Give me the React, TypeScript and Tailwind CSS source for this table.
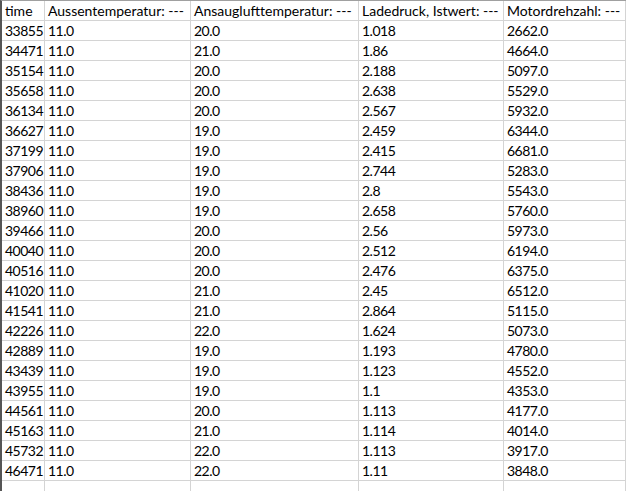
const headers = [
  "time",
  "Aussentemperatur: ---",
  "Ansauglufttemperatur: ---",
  "Ladedruck, Istwert: ---",
  "Motordrehzahl: ---",
];

const rows: string[][] = [
  ["33855", "11.0", "20.0", "1.018", "2662.0"],
  ["34471", "11.0", "21.0", "1.86", "4664.0"],
  ["35154", "11.0", "20.0", "2.188", "5097.0"],
  ["35658", "11.0", "20.0", "2.638", "5529.0"],
  ["36134", "11.0", "20.0", "2.567", "5932.0"],
  ["36627", "11.0", "19.0", "2.459", "6344.0"],
  ["37199", "11.0", "19.0", "2.415", "6681.0"],
  ["37906", "11.0", "19.0", "2.744", "5283.0"],
  ["38436", "11.0", "19.0", "2.8", "5543.0"],
  ["38960", "11.0", "19.0", "2.658", "5760.0"],
  ["39466", "11.0", "20.0", "2.56", "5973.0"],
  ["40040", "11.0", "20.0", "2.512", "6194.0"],
  ["40516", "11.0", "20.0", "2.476", "6375.0"],
  ["41020", "11.0", "21.0", "2.45", "6512.0"],
  ["41541", "11.0", "21.0", "2.864", "5115.0"],
  ["42226", "11.0", "22.0", "1.624", "5073.0"],
  ["42889", "11.0", "19.0", "1.193", "4780.0"],
  ["43439", "11.0", "19.0", "1.123", "4552.0"],
  ["43955", "11.0", "19.0", "1.1", "4353.0"],
  ["44561", "11.0", "20.0", "1.113", "4177.0"],
  ["45163", "11.0", "21.0", "1.114", "4014.0"],
  ["45732", "11.0", "22.0", "1.113", "3917.0"],
  ["46471", "11.0", "22.0", "1.11", "3848.0"],
  ["", "", "", "", ""],
];

function Cell({ text, numeric }: { text: string; numeric?: boolean }) {
  return (
    <div
      className={`h-[20px] border-r border-b border-[#d4d4d4] pl-[3px] leading-[19px] whitespace-nowrap overflow-hidden ${
        numeric ? "tracking-[-0.5px]" : ""
      }`}
    >
      {text}
    </div>
  );
}

export default function App() {
  return (
    <div className="w-[626px] h-[491px] overflow-hidden bg-white">
      <div
        className="grid grid-cols-[43px_146px_168px_145px_122px_2px] border-t border-l-2 border-t-[#a0a0a0] border-l-[#555555] text-black text-[14px]"
        style={{ fontFamily: "Lato, 'Open Sans', sans-serif" }}
      >
        {headers.map((t, j) => (
          <Cell key={j} text={t} />
        ))}
        <div className="h-[20px] border-b border-[#d4d4d4]" />
        {rows.map((r, i) => (
          <div key={i} className="contents">
            {r.map((t, j) => (
              <Cell key={j} text={t} numeric />
            ))}
            <div className="h-[20px] border-b border-[#d4d4d4]" />
          </div>
        ))}
      </div>
    </div>
  );
}
